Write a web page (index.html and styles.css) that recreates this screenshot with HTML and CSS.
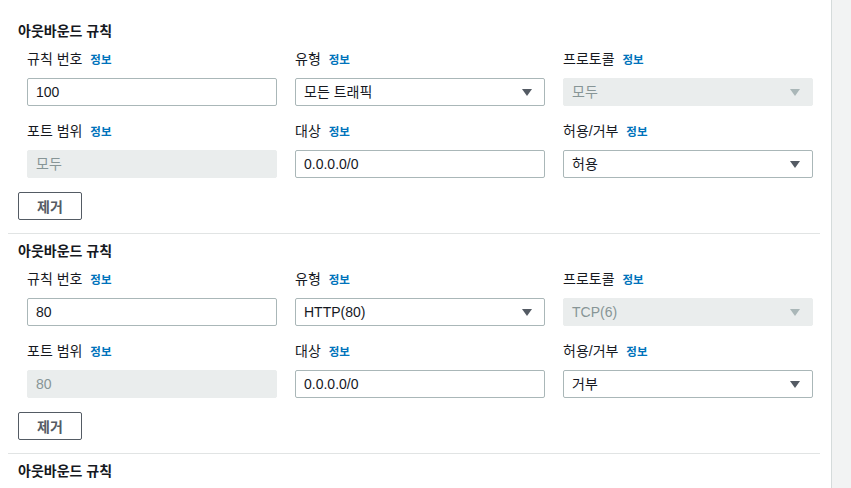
FILE: index.html
```html
<!DOCTYPE html>
<html lang="ko">
<head>
<meta charset="utf-8">
<link rel="stylesheet" href="styles.css">
</head>
<body>
<div class="layout">
  <main class="main">
    <section class="rule">
      <h3 class="rule-title">아웃바운드 규칙</h3>
      <div class="fields">
        <div class="field"><div class="label">규칙 번호 <a class="info">정보</a></div><div class="input">100</div></div>
        <div class="field"><div class="label">유형 <a class="info">정보</a></div><div class="input select">모든 트래픽<span class="caret"></span></div></div>
        <div class="field"><div class="label">프로토콜 <a class="info">정보</a></div><div class="input select disabled">모두<span class="caret"></span></div></div>
        <div class="field"><div class="label">포트 범위 <a class="info">정보</a></div><div class="input disabled">모두</div></div>
        <div class="field"><div class="label">대상 <a class="info">정보</a></div><div class="input">0.0.0.0/0</div></div>
        <div class="field"><div class="label">허용/거부 <a class="info">정보</a></div><div class="input select">허용<span class="caret"></span></div></div>
      </div>
      <button class="btn">제거</button>
    </section>
    <section class="rule">
      <h3 class="rule-title">아웃바운드 규칙</h3>
      <div class="fields">
        <div class="field"><div class="label">규칙 번호 <a class="info">정보</a></div><div class="input">80</div></div>
        <div class="field"><div class="label">유형 <a class="info">정보</a></div><div class="input select">HTTP(80)<span class="caret"></span></div></div>
        <div class="field"><div class="label">프로토콜 <a class="info">정보</a></div><div class="input select disabled">TCP(6)<span class="caret"></span></div></div>
        <div class="field"><div class="label">포트 범위 <a class="info">정보</a></div><div class="input disabled">80</div></div>
        <div class="field"><div class="label">대상 <a class="info">정보</a></div><div class="input">0.0.0.0/0</div></div>
        <div class="field"><div class="label">허용/거부 <a class="info">정보</a></div><div class="input select">거부<span class="caret"></span></div></div>
      </div>
      <button class="btn">제거</button>
    </section>
    <section class="rule">
      <h3 class="rule-title">아웃바운드 규칙</h3>
    </section>
  </main>
  <aside class="side"></aside>
</div>
</body>
</html>
```
FILE: styles.css
```css
html, body {
  margin: 0;
  padding: 0;
  height: 100%;
  background: #ffffff;
  font-family: "Liberation Sans", "Noto Sans CJK KR", sans-serif;
  color: #16191f;
  overflow: hidden;
}
.layout {
  display: flex;
  height: 100%;
}
.main {
  flex: 1;
  padding: 14px 11px 0 8px;
}
.side {
  width: 19px;
  background: #f2f3f3;
  border-left: 1px solid #d5dbdb;
}
.rule {
  padding: 7px 0 13px 10px;
  border-bottom: 1px solid #e1e4e4;
}
.rule-title {
  margin: 0;
  font-size: 14px;
  font-weight: bold;
  line-height: 20px;
  height: 20px;
}
.fields {
  display: grid;
  grid-template-columns: repeat(3, 250px);
  column-gap: 18px;
  row-gap: 16px;
  margin: 9px 0 0 9px;
}
.label {
  font-size: 14px;
  line-height: 18px;
  height: 18px;
  margin-bottom: 10px;
  white-space: nowrap;
}
.info {
  color: #0073bb;
  font-size: 11.5px;
  font-weight: bold;
  margin-left: 4px;
}
.input {
  position: relative;
  box-sizing: border-box;
  height: 28px;
  border: 1px solid #aab7b8;
  border-radius: 2px;
  padding: 0 8px;
  font-size: 14px;
  line-height: 26px;
  color: #16191f;
}
.input.disabled {
  background: #eaeded;
  border-color: #eaeded;
  color: #879596;
}
.caret {
  position: absolute;
  right: 12px;
  top: 10px;
  width: 0;
  height: 0;
  border-left: 5px solid transparent;
  border-right: 5px solid transparent;
  border-top: 7px solid #545b64;
}
.disabled .caret {
  border-top-color: #aab7b8;
}
.btn {
  display: block;
  margin-top: 14px;
  width: 64px;
  height: 28px;
  box-sizing: border-box;
  background: #ffffff;
  border: 1px solid #545b64;
  border-radius: 2px;
  font-family: "Liberation Sans", "Noto Sans CJK KR", sans-serif;
  font-size: 14px;
  font-weight: bold;
  color: #545b64;
  padding: 0;
}
```
